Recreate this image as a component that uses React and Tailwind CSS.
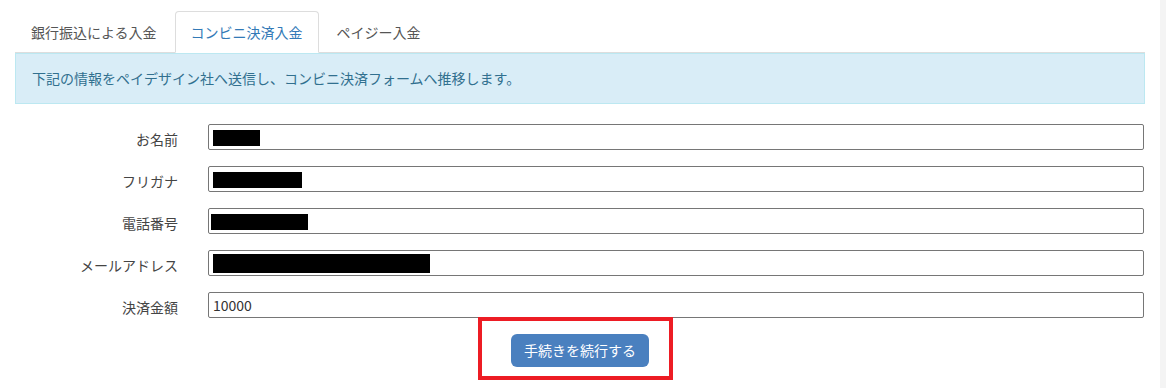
import { useState } from "react";

const tabs = ["銀行振込による入金", "コンビニ決済入金", "ペイジー入金"];

const fields = [
    { label: "お名前", mask: "w-[47px] h-[16px] mt-[1px]" },
    { label: "フリガナ", mask: "w-[89px] h-[16px] mt-[2px]" },
    { label: "電話番号", mask: "w-[97px] h-[16px] mt-[1px] -ml-[2px]" },
    { label: "メールアドレス", mask: "w-[217px] h-[19px]" },
];

function Field({ label, children }) {
    return (
        <div className="flex items-center gap-[30px]">
            <div className="w-[163px] pt-[5px] text-right text-[14px] text-[#444]">{label}</div>
            <div className="flex h-[26px] flex-1 items-center border border-[#767676] bg-white px-[4px] rounded-[2px]">
                {children}
            </div>
        </div>
    );
}

export default function App() {
    const [active, setActive] = useState(1);

    return (
        <div
            className="flex h-[388px] w-[1166px] overflow-hidden bg-white"
            style={{ fontFamily: '"Noto Sans CJK JP", "Noto Sans", sans-serif' }}
        >
            <div className="flex-1 px-[15px] pt-[11px]">
                {/* tabs */}
                <ul className="flex border-b border-[#ddd]">
                    {tabs.map((t, i) => (
                        <li key={t} className="-mb-px mr-[2px]">
                            <button
                                type="button"
                                onClick={() => setActive(i)}
                                className={
                                    i === active
                                        ? "h-[42px] rounded-t-[4px] border border-[#ddd] border-b-transparent bg-white px-[15px] text-[14px] text-[#337ab7]"
                                        : "h-[42px] rounded-t-[4px] border border-transparent px-[15px] text-[14px] text-[#555]"
                                }
                            >
                                {t}
                            </button>
                        </li>
                    ))}
                </ul>

                {/* notice */}
                <div className="flex h-[51px] items-center border border-[#bce8f1] bg-[#d9edf7] px-[16px] text-[14px] text-[#31708f]">
                    下記の情報をペイデザイン社へ送信し、コンビニ決済フォームへ推移します。
                </div>

                {/* form */}
                <div className="mt-[20px] flex flex-col gap-[16px] pr-px">
                    {fields.map((f) => (
                        <Field key={f.label} label={f.label}>
                            <span className={`block bg-black ${f.mask}`} />
                        </Field>
                    ))}
                    <Field label="決済金額">
                        <span className="text-[14px] text-[#333]">10000</span>
                    </Field>
                </div>

                <div className="-mt-px flex justify-center pr-[9px]">
                    <div className="h-[63px] w-[195px] border-[4px] border-[#ed1c24] pl-[29px] pt-[13px]">
                        <button
                            type="button"
                            className="h-[33px] w-[138px] rounded-[6px] bg-[#4a80bf] text-[14px] text-white"
                        >
                            手続きを続行する
                        </button>
                    </div>
                </div>
            </div>

            <div className="w-[6px] bg-[#f4f4f4]" />
        </div>
    );
}
